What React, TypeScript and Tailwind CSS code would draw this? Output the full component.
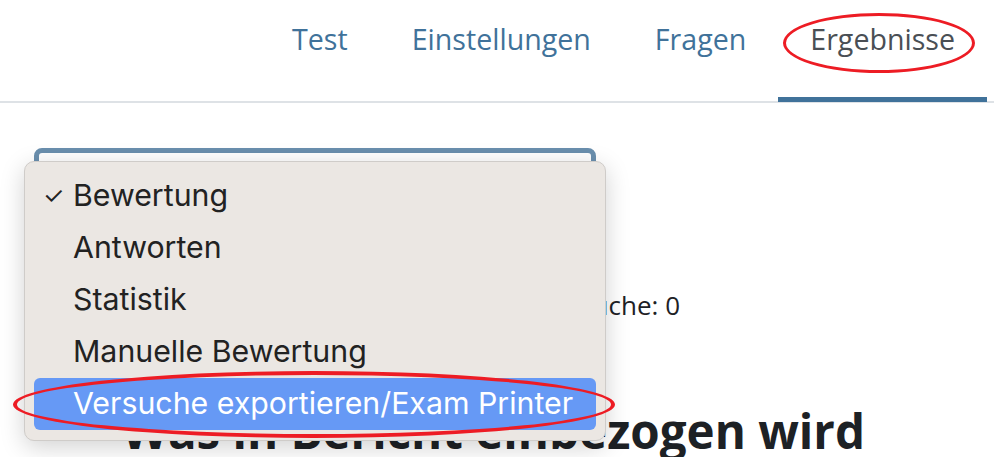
import React from "react"

const tabs = [
  { label: "Test", active: false },
  { label: "Einstellungen", active: false },
  { label: "Fragen", active: false },
  { label: "Ergebnisse", active: true },
]

const menuItems = [
  "Bewertung",
  "Antworten",
  "Statistik",
  "Manuelle Bewertung",
  "Versuche exportieren/Exam Printer",
]

const App = () => {
  return (
    <div className="relative h-[457px] w-full overflow-hidden bg-white font-['Open_Sans',sans-serif] text-[#1d2125]">
      {/* Tabs */}
      <nav className="flex h-[103px] items-start justify-end border-b-2 border-[#dee2e6] pr-[7px]">
        {tabs.map((t) => (
          <div
            key={t.label}
            className={
              t.active
                ? "relative h-[102px] border-b-[5px] border-[#40729a] px-8 pt-[19px] text-[28.6px] leading-[40px] text-[#4a4f55]"
                : "relative h-[102px] px-8 pt-[19px] text-[28.6px] leading-[40px] text-[#40729a]"
            }
          >
            {t.label}
            {t.active && (
              <div className="absolute left-[5px] top-[13px] h-[60px] w-[192px] rounded-[50%] border-[3px] border-[#ed1c24]" />
            )}
          </div>
        ))}
      </nav>

      {/* Page content behind the menu */}
      <div className="px-[34px] pt-[45px]">
        <div className="h-[48px] w-[562px] rounded-[8px] border-[5px] border-[#6a8fae] bg-white" />
        <div className="mt-[89px] w-[646px] whitespace-nowrap text-right text-[26px] leading-[40px]">
          Anzahl der Versuche: 0
        </div>
        <div className="mt-[78px] flex items-center whitespace-nowrap">
          <svg className="ml-[30px] h-[18px] w-[18px]" viewBox="0 0 24 24" fill="none" stroke="#1d2125" strokeWidth="4">
            <path d="M4 8l8 8 8-8" />
          </svg>
          <h2 className="ml-[40px] text-[47.5px] font-bold leading-[56px]">Was in Bericht einbezogen wird</h2>
        </div>
      </div>

      {/* Native select popup */}
      <div className="absolute left-[24px] top-[161px] h-[280px] w-[582px] rounded-[10px] border border-[#cfccc9] bg-[#ebe7e3] px-[9px] pt-[8px] font-['Inter',sans-serif] text-[30.3px] text-[#222] shadow-[0_6px_24px_rgba(0,0,0,0.18)]">
        {menuItems.map((item, i) => (
          <div
            key={item}
            className={
              i === 4
                ? "flex h-[52px] items-center rounded-[6px] bg-[#6699f5] pl-[9px] text-white"
                : "flex h-[52px] items-center pl-[9px]"
            }
          >
            <span className="w-[30px] text-[24px]">{i === 0 ? "✓" : ""}</span>
            <span className="whitespace-nowrap">{item}</span>
          </div>
        ))}
        <div className="absolute left-[-12px] top-[209px] h-[67px] w-[602px] rounded-[50%] border-[4px] border-[#ed1c24]" />
      </div>
    </div>
  )
}

export default App
